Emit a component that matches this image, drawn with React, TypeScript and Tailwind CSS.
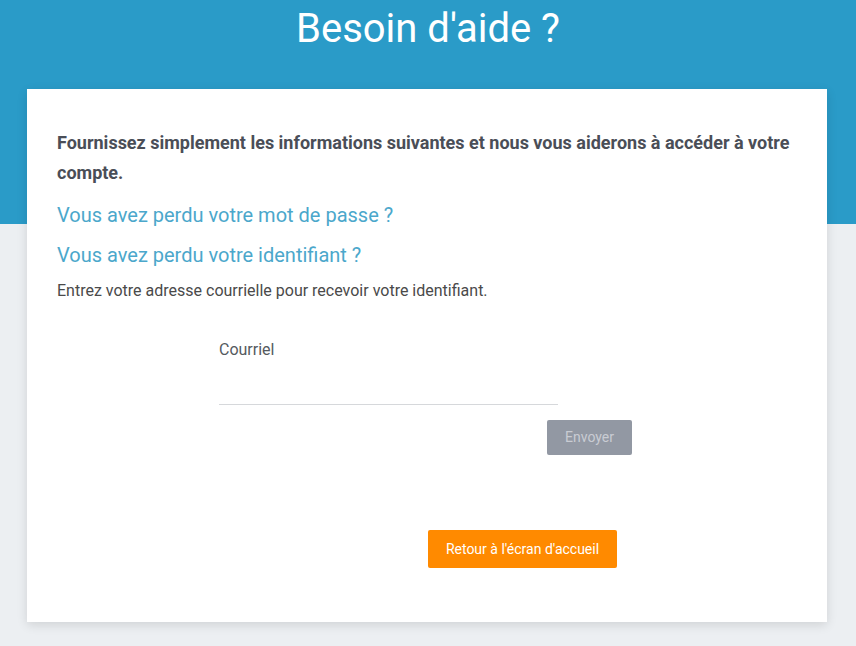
export default function App() {
  return (
    <div
      className="min-h-screen bg-[#eceff2]"
      style={{ fontFamily: "Roboto, 'Noto Sans', sans-serif" }}
    >
      <header className="h-[224px] bg-[#2a9bc8]">
        <h1 className="pt-[5px] text-center text-[40px] leading-[48px] text-white">
          Besoin d'aide ?
        </h1>
      </header>

      <main className="-mt-[135px] ml-[27px] w-[800px] bg-white px-[30px] pt-[39px] pb-[54px] shadow-[0_3px_10px_rgba(0,0,0,0.12)]">
        <p className="text-[18px] font-bold leading-[30px] text-[#4a4e57]">
          Fournissez simplement les informations suivantes et nous vous aiderons à accéder à votre compte.
        </p>
        <a href="#" className="mt-[7px] block text-[20px] leading-[40px] text-[#4ba7cb]">
          Vous avez perdu votre mot de passe ?
        </a>
        <a href="#" className="block text-[20px] leading-[40px] text-[#4ba7cb]">
          Vous avez perdu votre identifiant ?
        </a>
        <p className="mt-[4px] text-[16px] leading-[24px] text-[#4a4a4a]">
          Entrez votre adresse courrielle pour recevoir votre identifiant.
        </p>

        <form className="mt-[35px] ml-[162px] flex w-[413px] flex-col">
          <label className="text-[16px] leading-[24px] text-[#555a60]">Courriel</label>
          <input
            type="email"
            className="h-[43px] w-[339px] border-b border-[#d6d8db] bg-transparent outline-none"
          />
          <button
            type="button"
            className="mt-[15px] h-[35px] w-[85px] self-end rounded-[2px] bg-[#9298a3] text-[14px] text-[#c9ccd3]"
          >
            Envoyer
          </button>
          <button
            type="button"
            className="mt-[75px] ml-[209px] h-[38px] w-[189px] rounded-[2px] bg-[#ff8a00] text-[14px] text-white"
          >
            Retour à l'écran d'accueil
          </button>
        </form>
      </main>
    </div>
  );
}
